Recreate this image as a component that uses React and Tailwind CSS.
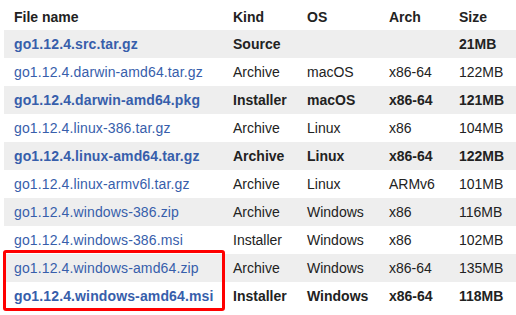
export default function App() {
  const rows = [
    ["go1.12.4.src.tar.gz", "Source", "", "", "21MB", true],
    ["go1.12.4.darwin-amd64.tar.gz", "Archive", "macOS", "x86-64", "122MB", false],
    ["go1.12.4.darwin-amd64.pkg", "Installer", "macOS", "x86-64", "121MB", true],
    ["go1.12.4.linux-386.tar.gz", "Archive", "Linux", "x86", "104MB", false],
    ["go1.12.4.linux-amd64.tar.gz", "Archive", "Linux", "x86-64", "122MB", true],
    ["go1.12.4.linux-armv6l.tar.gz", "Archive", "Linux", "ARMv6", "101MB", false],
    ["go1.12.4.windows-386.zip", "Archive", "Windows", "x86", "116MB", false],
    ["go1.12.4.windows-386.msi", "Installer", "Windows", "x86", "102MB", false],
    ["go1.12.4.windows-amd64.zip", "Archive", "Windows", "x86-64", "135MB", false],
    ["go1.12.4.windows-amd64.msi", "Installer", "Windows", "x86-64", "118MB", true],
  ];
  return (
    <div className="relative w-[516px] h-[315px] bg-white overflow-hidden text-[14px] text-[#222]" style={{ fontFamily: '"Liberation Sans", Arial, sans-serif' }}>
      <div className="ml-[4px] flex flex-col">
        <div className="flex h-[30px] pt-[4px] items-center font-bold">
          <div className="w-[219px] pl-[10px]">File name</div>
          <div className="w-[74px] pl-[10px]">Kind</div>
          <div className="w-[82px] pl-[10px]">OS</div>
          <div className="w-[70px] pl-[10px]">Arch</div>
          <div className="flex-1 pl-[10px]">Size</div>
        </div>
        {rows.map((r, i) => (
          <div key={i} className={`flex h-[28px] items-center ${i % 2 === 0 ? "bg-[#eeeeee]" : "bg-white"} ${r[5] ? "font-bold" : ""}`}>
            <div className="w-[219px] pl-[10px] text-[#375eab] tracking-[0.13px]">{r[0]}</div>
            <div className="w-[74px] pl-[10px]">{r[1]}</div>
            <div className="w-[82px] pl-[10px]">{r[2]}</div>
            <div className="w-[70px] pl-[10px]">{r[3]}</div>
            <div className="flex-1 pl-[10px]">{r[4]}</div>
          </div>
        ))}
      </div>
      <div className="absolute left-[3px] top-[250px] w-[222px] h-[61px] border-[3px] border-[#ff0000] rounded-[3px]"></div>
    </div>
  );
}
